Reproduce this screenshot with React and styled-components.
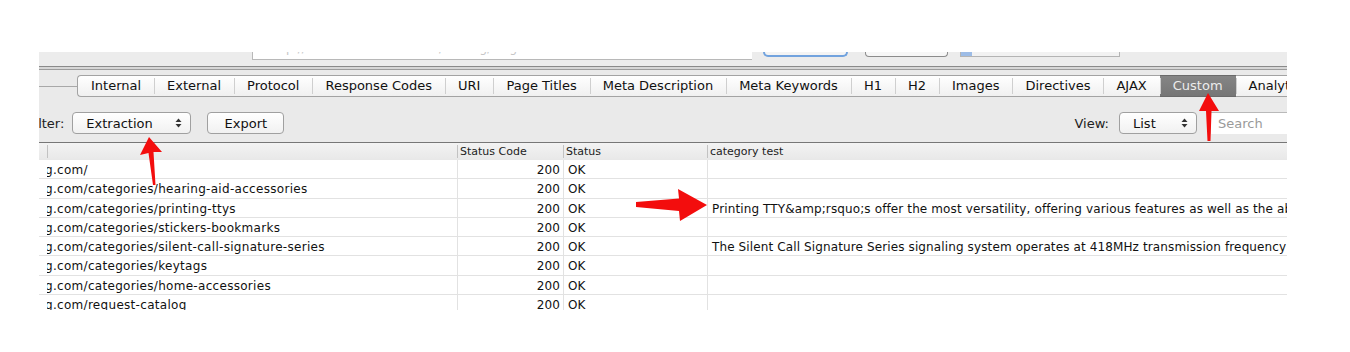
import React from 'react';
import styled, { createGlobalStyle } from 'styled-components';

const GlobalStyle = createGlobalStyle`
  html, body {
    margin: 0;
    padding: 0;
    background: #fff;
  }
  body {
    font-family: "DejaVu Sans", "Liberation Sans", sans-serif;
    color: #111;
  }
`;

const tabs = [
  'Internal',
  'External',
  'Protocol',
  'Response Codes',
  'URI',
  'Page Titles',
  'Meta Description',
  'Meta Keywords',
  'H1',
  'H2',
  'Images',
  'Directives',
  'AJAX',
  'Custom',
  'Analytics',
];

const rows = [
  { url: 'g.com/', code: 200, status: 'OK', text: '' },
  { url: 'g.com/categories/hearing-aid-accessories', code: 200, status: 'OK', text: '' },
  {
    url: 'g.com/categories/printing-ttys',
    code: 200,
    status: 'OK',
    text: 'Printing TTY&amp;rsquo;s offer the most versatility, offering various features as well as the ability to print conversations',
  },
  { url: 'g.com/categories/stickers-bookmarks', code: 200, status: 'OK', text: '' },
  {
    url: 'g.com/categories/silent-call-signature-series',
    code: 200,
    status: 'OK',
    text: 'The Silent Call Signature Series signaling system operates at 418MHz transmission frequency and alerts you',
  },
  { url: 'g.com/categories/keytags', code: 200, status: 'OK', text: '' },
  { url: 'g.com/categories/home-accessories', code: 200, status: 'OK', text: '' },
  { url: 'g.com/request-catalog', code: 200, status: 'OK', text: '' },
];

function UpDown() {
  return (
    <Arrows width="7" height="10" viewBox="0 0 7 10">
      <path d="M3.5 0.5 L6.5 4 L0.5 4 Z" fill="#333" />
      <path d="M3.5 9.5 L6.5 6 L0.5 6 Z" fill="#333" />
    </Arrows>
  );
}

function App() {
  return (
    <Page>
      <GlobalStyle />
      <Frame>
        <TopStrip>
          <UrlField>
            <UrlText>http://www.harriscomm.com/catalog/blog</UrlText>
          </UrlField>
          <StartButton />
          <ClearButton />
          <Progress>
            <ProgressFill />
          </Progress>
        </TopStrip>
        <Divider />
        <TabBar>
          <TabRule />
          {tabs.map((t, i) => (
            <Tab key={t} first={i === 0} selected={t === 'Custom'}>
              {t}
            </Tab>
          ))}
        </TabBar>
        <FilterRow>
          <Label>Filter:</Label>
          <Select width={119}>
            Extraction
            <UpDown />
          </Select>
          <Button>Export</Button>
          <Spacer />
          <Label>View:</Label>
          <Select width={78}>
            List
            <UpDown />
          </Select>
          <Search>Search</Search>
        </FilterRow>
        <Table>
          <HeaderRow>
            <HeadCell />
            <HeadCell />
            <HeadCell>Status Code</HeadCell>
            <HeadCell>Status</HeadCell>
            <HeadCell>category test</HeadCell>
          </HeaderRow>
          {rows.map((r) => (
            <Row key={r.url}>
              <Cell />
              <UrlCell>{r.url}</UrlCell>
              <Cell align="right" line>
                {r.code}
              </Cell>
              <Cell line>{r.status}</Cell>
              <Cell line>{r.text}</Cell>
            </Row>
          ))}
        </Table>
      </Frame>
      <Overlay width="1350" height="352" viewBox="0 0 1350 352">
        <polygon
          points="149,137 162,152 153.5,152 155.5,185 153,185 148.5,153 140,155"
          fill="#f30d0d"
        />
        <polygon
          points="1208,93 1219,111 1211.5,111 1210.5,141 1207.5,141 1206,111 1199,111"
          fill="#f30d0d"
        />
        <polygon
          points="636,202 679,198.5 678,189 707,205 680,221 679,211 636,207"
          fill="#f30d0d"
        />
      </Overlay>
    </Page>
  );
}

export default App;

const Page = styled.div`
  position: relative;
  width: 1350px;
  height: 352px;
  overflow: hidden;
`;

const Frame = styled.div`
  margin: 52px 0 0 39px;
  width: 1248px;
  height: 258px;
  overflow: hidden;
  background: #eaeaea;
  display: flex;
  flex-direction: column;
`;

const TopStrip = styled.div`
  flex: none;
  height: 14px;
  display: flex;
  align-items: flex-start;
  background: #ececec;
`;

const UrlField = styled.div`
  flex: none;
  margin-left: 213px;
  width: 500px;
  height: 8px;
  box-sizing: border-box;
  background: #fff;
  border-left: 1px solid #b8b8b8;
  border-bottom: 1px solid #b8b8b8;
  overflow: hidden;
`;

const UrlText = styled.div`
  margin-top: -10px;
  padding-left: 16px;
  font-size: 12px;
  line-height: 13px;
  color: #c6c6c6;
  white-space: nowrap;
`;

const StartButton = styled.div`
  flex: none;
  margin-left: 11px;
  width: 85px;
  height: 5px;
  box-sizing: border-box;
  background: #f4f4f4;
  border: 2px solid #72a3de;
  border-top: none;
  border-radius: 0 0 5px 5px;
`;

const ClearButton = styled.div`
  flex: none;
  margin-left: 17px;
  width: 83px;
  height: 5px;
  box-sizing: border-box;
  background: #f7f7f7;
  border: 1px solid #8c8c8c;
  border-top: none;
  border-radius: 0 0 4px 4px;
`;

const Progress = styled.div`
  flex: none;
  margin-left: 12px;
  width: 160px;
  height: 5px;
  box-sizing: border-box;
  background: #f2f2f2;
  border: 1px solid #b4b4b4;
  border-top: none;
  display: flex;
`;

const ProgressFill = styled.div`
  width: 11px;
  background: #9dbce6;
`;

const Divider = styled.div`
  flex: none;
  height: 2px;
  background: #d6d6d6;
  border-top: 1px solid #8a8a8a;
  border-bottom: 1px solid #9c9c9c;
`;

const TabBar = styled.div`
  flex: none;
  padding-top: 5px;
  display: flex;
  align-items: center;
  white-space: nowrap;
`;

const TabRule = styled.div`
  width: 38px;
  flex: none;
  height: 1px;
  background: #a8a8a8;
`;

const Tab = styled.div`
  position: relative;
  flex: none;
  height: 22px;
  box-sizing: border-box;
  padding: 0 13px;
  font-size: 13px;
  line-height: 20px;
  color: ${(p) => (p.selected ? '#ececec' : '#111')};
  background: ${(p) =>
    p.selected ? 'linear-gradient(#858585, #767676)' : 'linear-gradient(#ffffff, #f0f0f0)'};
  border-top: 1px solid ${(p) => (p.selected ? '#6a6a6a' : '#a3a3a3')};
  border-bottom: 1px solid ${(p) => (p.selected ? '#6a6a6a' : '#a3a3a3')};
  border-left: ${(p) => (p.first ? '1px solid #a3a3a3' : 'none')};
  border-radius: ${(p) => (p.first ? '4px 0 0 4px' : '0')};

  &::before {
    content: '';
    display: ${(p) => (p.first ? 'none' : 'block')};
    position: absolute;
    left: 0;
    top: 2px;
    bottom: 2px;
    width: 1px;
    background: #cfcfcf;
  }
`;

const FilterRow = styled.div`
  flex: none;
  padding: 15px 0 8px;
  height: 22px;
  display: flex;
  align-items: center;
  font-size: 13px;
`;

const Label = styled.div`
  flex: none;
  color: #222;

  &:first-child {
    margin-left: -11px;
  }
`;

const Select = styled.div`
  flex: none;
  margin-left: ${(p) => (p.width > 100 ? 8 : 10)}px;
  width: ${(p) => p.width}px;
  height: 22px;
  box-sizing: border-box;
  padding: 0 8px 0 13px;
  display: flex;
  align-items: center;
  justify-content: space-between;
  background: linear-gradient(#ffffff, #f1f1f1);
  border: 1px solid #a0a0a0;
  border-radius: 4px;
  color: #111;
`;

const Arrows = styled.svg`
  display: block;
`;

const Button = styled.div`
  flex: none;
  margin-left: 16px;
  width: 77px;
  height: 22px;
  box-sizing: border-box;
  display: flex;
  align-items: center;
  justify-content: center;
  background: linear-gradient(#ffffff, #f1f1f1);
  border: 1px solid #a0a0a0;
  border-radius: 4px;
  color: #111;
`;

const Spacer = styled.div`
  flex: 1;
`;

const Search = styled.div`
  flex: none;
  margin-left: 13px;
  width: 77px;
  height: 22px;
  box-sizing: border-box;
  padding-left: 7px;
  display: flex;
  align-items: center;
  background: #fff;
  border-top: 1px solid #b9b9b9;
  border-left: 1px solid #d0d0d0;
  color: #9a9a9a;
`;

const Table = styled.div`
  flex: 1;
  min-height: 0;
  overflow: hidden;
  background: #fff;
  border-top: 1px solid #777;
`;

const columns = '8px 410px 106px 144px 1fr';

const HeaderRow = styled.div`
  display: grid;
  grid-template-columns: ${columns};
  height: 17px;
  background: linear-gradient(#f3f3f3, #e8e8e8);
  font-size: 11px;
  line-height: 17px;
  color: #222;
`;

const HeadCell = styled.div`
  position: relative;
  padding-left: 3px;
  white-space: nowrap;
  overflow: hidden;

  &:not(:first-child)::before {
    content: '';
    position: absolute;
    left: 0;
    top: 2px;
    bottom: 2px;
    width: 1px;
    background: #c2c2c2;
  }
`;

const Row = styled.div`
  display: grid;
  grid-template-columns: ${columns};
  height: 19.3px;
  box-sizing: border-box;
  border-bottom: 1px solid #e2e2e2;
  font-size: 12px;
  line-height: 18px;
  letter-spacing: 0.12px;
`;

const Cell = styled.div`
  padding: 1px ${(p) => (p.align === 'right' ? '3px' : '0')} 0 ${(p) => (p.align === 'right' ? '0' : '4px')};
  text-align: ${(p) => p.align || 'left'};
  white-space: nowrap;
  overflow: hidden;
  border-left: ${(p) => (p.line ? '1px solid #e2e2e2' : 'none')};
`;

const UrlCell = styled.div`
  padding-top: 1px;
  white-space: nowrap;
  overflow: hidden;
  text-indent: -2px;
  letter-spacing: 0.3px;
`;

const Overlay = styled.svg`
  position: absolute;
  top: 0;
  left: 0;
  pointer-events: none;
`;
